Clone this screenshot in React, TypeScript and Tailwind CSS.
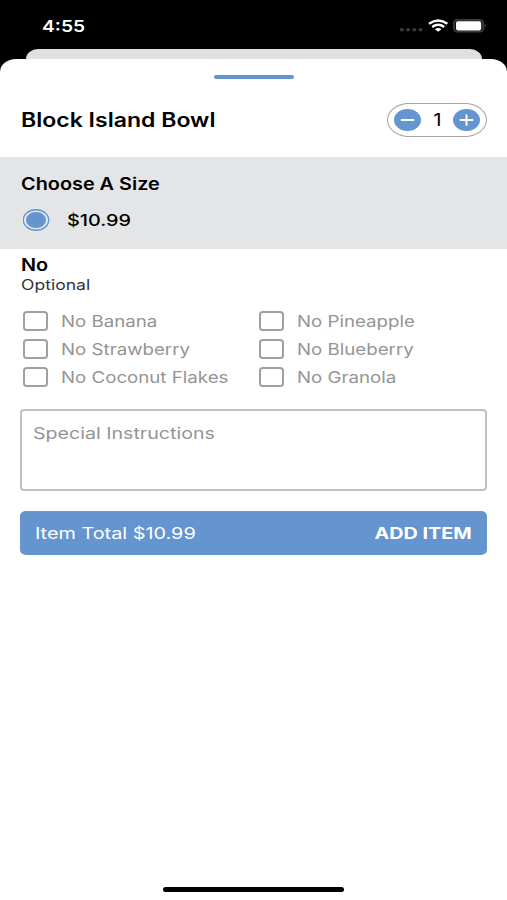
import { ReactNode, useState } from 'react';
import clsx from 'clsx';

const options = ['No Banana', 'No Pineapple', 'No Strawberry', 'No Blueberry', 'No Coconut Flakes', 'No Granola'];

const Wide = ({ children, className }: { children: ReactNode; className?: string }) => (
  <span className={clsx('block whitespace-nowrap', className)}>{children}</span>
);

const StatusBar = () => (
  <div className="flex h-[49px] items-start justify-between pl-[42px] pr-[21px] pt-[16px] text-white">
    <Wide className="origin-left scale-x-[1.2] text-[16px] leading-5 font-semibold">4:55</Wide>
    <svg width="87" height="14" viewBox="0 0 87 14" className="mt-[3px]">
      {[0, 6.2, 12.4, 18.6].map(x => (
        <rect key={x} x={x + 1} y="9.2" width="3.8" height="3" rx="1" fill="#3c3c3c" />
      ))}
      <g fill="none" stroke="#fff" strokeWidth="2.3">
        <path d="M30 4.8Q39.2 -1.8 48.4 4.8" />
        <path d="M33.2 8Q39.2 3.6 45.2 8" />
      </g>
      <path d="M35.9 10.2Q39.2 7.6 42.5 10.2L39.2 12.8Z" fill="#fff" />
      <rect x="54.9" y="0.9" width="29.4" height="11.8" rx="3.4" fill="#111" stroke="#3c3c3c" strokeWidth="1.8" />
      <rect x="57" y="2.2" width="25.2" height="9.2" rx="1.8" fill="#fff" />
      <path d="M85.6 4.8Q88 6.8 85.6 8.8Z" fill="#555" />
    </svg>
  </div>
);

const QuantityPicker = () => {
  const [quantity, setQuantity] = useState(1);

  return (
    <div className="flex h-[34px] w-[100px] items-center justify-between rounded-[22px/17px] border-[1.5px] border-[#a4a4a4] px-[6px]">
      <button onClick={() => setQuantity(Math.max(1, quantity - 1))} aria-label="Remove one">
        <svg width="27" height="23" viewBox="0 0 27 23" className="block">
          <ellipse cx="13.5" cy="11" rx="13.5" ry="11" fill="#6495cf" />
          <path d="M7.5 11H19.5" stroke="#fff" strokeWidth="1.9" strokeLinecap="round" />
        </svg>
      </button>
      <Wide className="scale-x-[1.2] text-[17px] leading-5">{quantity}</Wide>
      <button onClick={() => setQuantity(quantity + 1)} aria-label="Add one">
        <svg width="27" height="23" viewBox="0 0 27 23" className="block">
          <ellipse cx="13.5" cy="11" rx="13.5" ry="11" fill="#6495cf" />
          <path d="M7.5 11H19.5M13.5 6.1V15.9" stroke="#fff" strokeWidth="1.9" strokeLinecap="round" />
        </svg>
      </button>
    </div>
  );
};

const Option = ({ label }: { label: string }) => {
  const [checked, setChecked] = useState(false);

  return (
    <button onClick={() => setChecked(!checked)} className="flex h-7 items-center gap-[13px]">
      <span
        className={clsx(
          'h-5 w-[25px] shrink-0 rounded-[4px/3.5px] border-2 border-[#a0a0a0]',
          checked && 'bg-[#6495cf]'
        )}
      />
      <Wide className="origin-left scale-x-[1.168] text-[16px] leading-5 text-[#949494]">{label}</Wide>
    </button>
  );
};

export default function App() {
  return (
    <div className="flex h-[900px] w-[507px] flex-col overflow-hidden bg-black font-['Inter',sans-serif] text-black">
      <StatusBar />
      <div className="mr-[25px] ml-[26px] h-[10px] shrink-0 rounded-t-[12px_10px] bg-[#e0e0e0]" />
      <main className="flex flex-1 flex-col rounded-t-[16px_13px] bg-white">
        <div className="mx-auto mt-4 h-[4px] w-[80px] shrink-0 rounded-full bg-[#6495cf]" />

        <header className="mt-6 flex h-[34px] items-center justify-between pr-5 pl-[21px]">
          <Wide className="origin-left scale-x-[1.182] text-[19.5px] leading-6 font-semibold">Block Island Bowl</Wide>
          <QuantityPicker />
        </header>

        <section className="mt-5 h-[92px] bg-[#e4e5e6] px-[21px] pt-[17px]">
          <Wide className="origin-left scale-x-[1.168] text-[17px] leading-5 font-semibold">Choose A Size</Wide>
          <div className="mt-[15px] flex items-center gap-[17px] pl-[2px]">
            <svg width="27" height="22" viewBox="0 0 27 22">
              <ellipse cx="13" cy="11" rx="12.7" ry="10.3" fill="#e4e5e6" stroke="#6495cf" strokeWidth="1.4" />
              <ellipse cx="13" cy="11" rx="10" ry="8.1" fill="#6495cf" />
            </svg>
            <Wide className="origin-left scale-x-[1.2] text-[16.5px] leading-5 font-medium">$10.99</Wide>
          </div>
        </section>

        <section className="px-[21px] pt-[6px]">
          <Wide className="origin-left scale-x-[1.168] text-[17px] leading-5 font-semibold">No</Wide>
          <Wide className="origin-left scale-x-[1.21] text-[14.5px] leading-[19px] text-[#333]">Optional</Wide>
          <div className="mt-[13px] grid grid-cols-[236px_1fr] pl-[2px]">
            {options.map(label => (
              <Option key={label} label={label} />
            ))}
          </div>
        </section>

        <div className="mx-5 mt-[18px] h-[82px] rounded-[4px] border-2 border-[#c0c0c0] px-[11px] pt-[12px]">
          <Wide className="origin-left scale-x-[1.225] text-[16px] leading-5 text-[#949494]">Special Instructions</Wide>
        </div>

        <button className="mx-5 mt-5 flex h-[44px] items-center justify-between rounded-[6px/5px] bg-[#6495cf] px-[15px] text-white">
          <Wide className="origin-left scale-x-[1.24] text-[16px] leading-5">Item Total $10.99</Wide>
          <Wide className="origin-right scale-x-[1.235] text-[16px] leading-5 font-bold">ADD ITEM</Wide>
        </button>

        <div className="mx-auto mt-auto mb-2 h-[5px] w-[181px] rounded-full bg-black" />
      </main>
    </div>
  );
}
